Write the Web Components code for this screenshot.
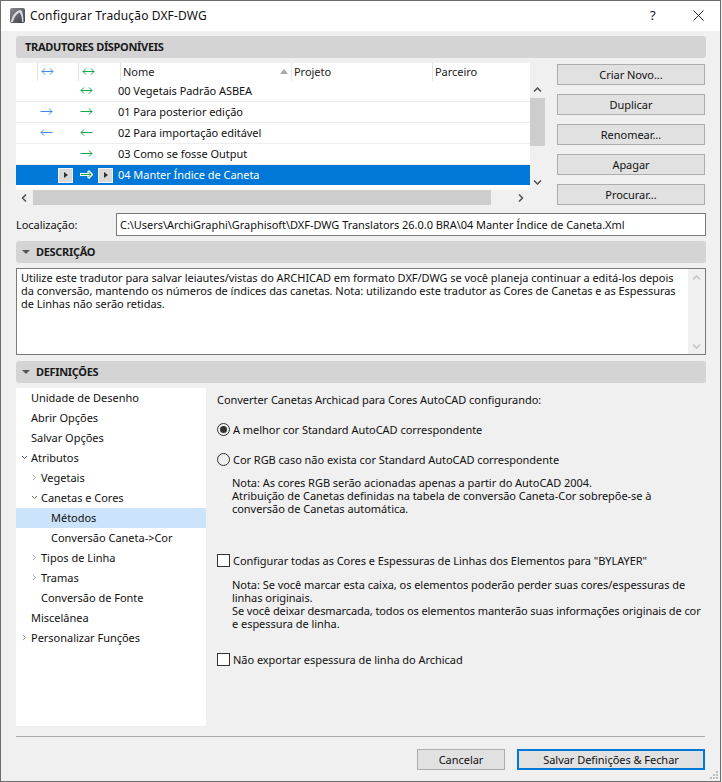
<!DOCTYPE html>
<html lang="pt">
<head>
<meta charset="utf-8">
<title>Configurar Tradução DXF-DWG</title>
<style>
  html, body { margin: 0; height: 782px; overflow: hidden; }
  body { font: 11px/15px "Noto Sans", sans-serif; color: #111; background: #f0f0f0; letter-spacing: -0.04px; }
</style>
</head>
<body>
<dxf-dialog></dxf-dialog>
<script>
const FONT = '"Noto Sans", sans-serif';

function arrow(kind, color) {
  const paths = {
    both: 'M1 4.5H12M4 1.5L1 4.5L4 7.5M9 1.5L12 4.5L9 7.5',
    right: 'M0.5 4.5H12M9 1.5L12 4.5L9 7.5',
    left: 'M1 4.5H12.5M4 1.5L1 4.5L4 7.5'
  };
  return `<svg width="13" height="10" viewBox="0 0 13 10" fill="none" stroke="${color}" stroke-width="1"><path d="${paths[kind]}"/></svg>`;
}

class SectionHead extends HTMLElement {
  constructor() {
    super();
    this.attachShadow({ mode: 'open' });
  }
  connectedCallback() {
    const tri = this.hasAttribute('open') ? '<i></i>' : '';
    this.shadowRoot.innerHTML = `
      <style>
        :host {
          display: flex; align-items: center; gap: 6px; box-sizing: border-box;
          height: 22px; padding: 0 0 2px ${tri ? 6 : 9}px;
          background: #d4d4d4; border-radius: 3px;
          font: 700 11px/15px ${FONT}; letter-spacing: -0.32px; color: #1a1a1a;
        }
        i { width: 0; height: 0; border: 4px solid transparent; border-top: 4px solid #555; border-bottom: 0; margin-top: 2px; }
      </style>${tri}<slot></slot>`;
  }
}

class PushButton extends HTMLElement {
  constructor() {
    super();
    this.attachShadow({ mode: 'open' });
    this.shadowRoot.innerHTML = `
      <style>
        :host {
          display: flex; align-items: center; justify-content: center;
          box-sizing: border-box; height: 21px;
          background: #e1e1e1; border: 1px solid #adadad;
          font: 11px/15px ${FONT}; color: #111;
        }
        :host([primary]) { border: 2px solid #0078d7; }
      </style><slot></slot>`;
  }
}

class ScrollBar extends HTMLElement {
  constructor() {
    super();
    this.attachShadow({ mode: 'open' });
  }
  connectedCallback() {
    const h = this.getAttribute('dir') === 'h';
    const off = this.hasAttribute('off');
    const thumb = this.getAttribute('thumb');
    const start = this.getAttribute('start') || 0;
    const rot = h ? ' style="transform:rotate(-90deg)"' : '';
    const chev = (d) => `<svg${rot} width="9" height="6" viewBox="0 0 9 6" fill="none" stroke="${off ? '#c4c4c4' : '#555'}" stroke-width="1.6"><path d="${d}"/></svg>`;
    this.shadowRoot.innerHTML = `
      <style>
        :host { display: flex; flex-direction: ${h ? 'row' : 'column'}; background: #f0f0f0; ${h ? 'height:15px' : 'width:15px'}; }
        :host([wide]) { width: 17px; }
        .b { flex: none; ${h ? 'width:17px' : 'height:17px'}; display: flex; align-items: center; justify-content: center; }
        .t { flex: 1; min-width: 0; min-height: 0; }
        .th { background: ${off ? 'transparent' : '#cdcdcd'}; ${h ? `height:100%;margin-left:${start}px;width:${thumb}px` : `width:100%;margin-top:${start}px;height:${thumb}px`}; }
      </style>
      <div class="b">${chev('M1 4.5L4.5 1L8 4.5')}</div>
      <div class="t"><div class="th"></div></div>
      <div class="b">${chev('M1 1.5L4.5 5L8 1.5')}</div>`;
  }
}

class TranslatorList extends HTMLElement {
  constructor() {
    super();
    this.attachShadow({ mode: 'open' });
  }
  connectedCallback() {
    const blue = '#3f8cf0', green = '#12a84c';
    const rows = [
      ['', 'both', '00 Vegetais Padrão ASBEA'],
      ['right', 'right', '01 Para posterior edição'],
      ['left', 'left', '02 Para importação editável'],
      ['', 'right', '03 Como se fosse Output']
    ];
    const play = '<b class="play"><u></u></b>';
    this.shadowRoot.innerHTML = `
      <style>
        :host { display: grid; grid-template-columns: 514px 15px; grid-template-rows: 127px 15px; width: 529px; height: 142px; font: 11px/15px ${FONT}; letter-spacing: -0.04px; }
        .table { background: #fff; overflow: hidden; }
        .head { display: grid; grid-template-columns: 21px 41px 42px 160px 11px 141px 1fr; height: 18px; align-items: center; color: #222; }
        .head > div { height: 18px; box-sizing: border-box; border-left: 1px solid #e3e3e3; display: flex; align-items: center; padding: 0 0 1px 2px; }
        .head > div:first-child, .head > .sort { border-left: 0; padding-left: 0; }
        .head > .ic { padding-bottom: 0; }
        .head svg { margin-left: 1px; }
        .sort span { width: 0; height: 0; border: 4px solid transparent; border-bottom: 5px solid #a8a8a8; border-top: 0; }
        .row { display: grid; grid-template-columns: 24px 13px 27px 13px 25px 1fr; height: 20px; margin-bottom: 1px; align-items: center; box-shadow: 0 1px 0 #eee; color: #111; }
        .row svg { display: block; }
        .row .c1 { grid-column: 2; }
        .row .c2 { grid-column: 4; }
        .row .n { grid-column: 6; padding-bottom: 1px; }
        .row.sel { background: #0078d7; color: #fff; box-shadow: none; grid-template-columns: 42px 15px 7px 13px 5px 15px 1fr; }
        .row.sel .n { grid-column: 7; padding-left: 5px; }
        .play { display: flex; align-items: center; justify-content: center; box-sizing: border-box; width: 15px; height: 15px; background: #d9d9d9; border: 1px solid #f2f2f2; }
        .play u { width: 0; height: 0; border: 3.5px solid transparent; border-left: 4px solid #333; border-right: 0; }
        scroll-bar[dir=v] { grid-column: 2; grid-row: 1; margin-top: 18px; }
        scroll-bar[dir=h] { grid-column: 1; grid-row: 2; margin-right: 1px; }
      </style>
      <div class="table">
        <div class="head">
          <div></div><div class="ic">${arrow('both', blue)}</div><div class="ic">${arrow('both', green)}</div>
          <div>Nome</div><div class="sort"><span></span></div><div>Projeto</div><div>Parceiro</div>
        </div>
        ${rows.map(r => `<div class="row"><span class="c1">${r[0] ? arrow(r[0], blue) : ''}</span><span class="c2">${arrow(r[1], green)}</span><span class="n">${r[2]}</span></div>`).join('')}
        <div class="row sel">
          <span style="grid-column:2">${play}</span>
          <span style="grid-column:4"><svg width="13" height="12" viewBox="0 0 13 12" fill="none"><path d="M0 5.5H11.5M8 2L11.5 5.5L8 9" stroke="#fff" stroke-width="3"/><path d="M1 5.5H11M8.5 3L11 5.5L8.5 8" stroke="#17a84f" stroke-width="1"/></svg></span>
          <span style="grid-column:6">${play}</span>
          <span class="n">04 Manter Índice de Caneta</span>
        </div>
      </div>
      <scroll-bar dir="v" thumb="48" start="0"></scroll-bar>
      <scroll-bar dir="h" thumb="458" start="0"></scroll-bar>`;
  }
}

class TreeItem extends HTMLElement {
  constructor() {
    super();
    this.attachShadow({ mode: 'open' });
  }
  connectedCallback() {
    const level = +this.getAttribute('level') || 0;
    const twist = this.getAttribute('twist');
    const icon = twist === 'open'
      ? '<svg width="7" height="7" viewBox="0 0 7 7" fill="none" stroke="#666"><path d="M1 2L3.5 4.5L6 2"/></svg>'
      : twist === 'closed'
        ? '<svg width="7" height="7" viewBox="0 0 7 7" fill="none" stroke="#a5a5a5"><path d="M2 1L4.5 3.5L2 6"/></svg>'
        : '';
    this.shadowRoot.innerHTML = `
      <style>
        :host { display: flex; align-items: center; box-sizing: border-box; height: 20px; padding: 0 0 2px ${5 + level * 10}px; font: 11px/15px ${FONT}; letter-spacing: -0.02px; color: #111; }
        :host([selected]) { background: #cce4fb; }
        .tw { width: 10px; flex: none; display: flex; align-items: center; }
      </style>
      <span class="tw">${icon}</span><slot></slot>`;
  }
}

class OptionMark extends HTMLElement {
  constructor() {
    super();
    this.attachShadow({ mode: 'open' });
  }
  connectedCallback() {
    const radio = this.getAttribute('type') === 'radio';
    const on = this.hasAttribute('checked');
    this.shadowRoot.innerHTML = `
      <style>
        :host { display: flex; align-items: center; gap: 3px; font: 11px/15px ${FONT}; color: #111; }
        .m { flex: none; box-sizing: border-box; width: 13px; height: 13px; border: 1px solid #333; background: ${radio ? 'transparent' : '#fff'}; border-radius: ${radio ? '50%' : '0'}; display: flex; align-items: center; justify-content: center; }
        .m i { width: 7px; height: 7px; border-radius: 50%; background: #333; }
      </style>
      <span class="m">${on ? '<i></i>' : ''}</span><slot></slot>`;
  }
}

class DxfDialog extends HTMLElement {
  constructor() {
    super();
    this.attachShadow({ mode: 'open' });
    this.shadowRoot.innerHTML = `
      <style>
        :host {
          display: flex; flex-direction: column; box-sizing: border-box;
          width: 721px; height: 782px; position: relative;
          background: #f0f0f0; border: 1px solid #6d6d6d;
          font: 11px/15px ${FONT}; color: #111;
        }
        .title { flex: none; height: 30px; box-sizing: border-box; padding: 0 0 2px 9px; background: #fff; display: flex; align-items: center; font-size: 12px; letter-spacing: .14px; color: #111; }
        .title svg.logo { margin-right: 5px; }
        .title .sp { flex: 1; }
        .title .q { width: 46px; text-align: center; font-size: 13px; }
        .title .x { width: 44px; display: flex; justify-content: center; }
        .body { flex: 1; padding: 5px 14px 0 15px; display: flex; flex-direction: column; min-height: 0; }
        .top { display: flex; margin-top: 5px; }
        .btns { margin-left: 12px; width: 148px; padding-top: 1px; display: flex; flex-direction: column; gap: 9px; }
        .loc { display: flex; align-items: center; margin-top: 8px; height: 23px; }
        .loc label { width: 100px; flex: none; }
        .loc div { flex: 1; box-sizing: border-box; height: 23px; background: #fff; border: 1px solid #7a7a7a; padding: 3px 3px; white-space: nowrap; }
        section-head.s2 { margin-top: 5px; }
        section-head.s3 { margin-top: 6px; }
        .desc { display: flex; height: 87px; margin-top: 5px; background: #fff; border: 1px solid #7a7a7a; box-sizing: border-box; }
        .desc p { flex: 1; margin: 0; padding: 2px 4px; line-height: 13px; }
        .defs { display: flex; margin-top: 5px; height: 338px; }
        .tree { width: 190px; flex: none; background: #fff; }
        .pane { padding: 4px 0 0 11px; flex: 1; }
        .pane p { margin: 0; }
        .pane .note { padding-left: 15px; line-height: 13px; white-space: nowrap; }
        .foot { margin: 10px 1px 0 0; border-top: 1px solid #a9a9a9; display: flex; justify-content: flex-end; gap: 12px; padding-top: 12px; }
        .grip { position: absolute; right: 1px; bottom: 1px; }
      </style>
      <div class="title">
        <svg class="logo" width="15" height="15" viewBox="0 0 15 15"><defs><linearGradient id="lg" x1="0" y1="0" x2="1" y2="1"><stop offset="0" stop-color="#8a8a94"/><stop offset="1" stop-color="#3c3c44"/></linearGradient></defs><rect width="15" height="15" rx="2" fill="url(#lg)"/><path d="M1 14C2 7 6 2.5 11 2C13 4 13.5 9 13.5 14H12C12 9 11 6 9.5 4.5C6.5 6 4 9 3 14Z" fill="#d8d8dc"/></svg>
        Configurar Tradução DXF-DWG
        <span class="sp"></span>
        <span class="q">?</span>
        <span class="x"><svg width="11" height="11" viewBox="0 0 11 11" stroke="#222" fill="none"><path d="M.5 .5L10.5 10.5M10.5 .5L.5 10.5"/></svg></span>
      </div>
      <div class="body">
        <section-head>TRADUTORES DÍSPONÍVEIS</section-head>
        <div class="top">
          <translator-list></translator-list>
          <div class="btns">
            <push-button>Criar Novo...</push-button>
            <push-button>Duplicar</push-button>
            <push-button>Renomear...</push-button>
            <push-button>Apagar</push-button>
            <push-button>Procurar...</push-button>
          </div>
        </div>
        <div class="loc"><label>Localização:</label><div>C:\\Users\\ArchiGraphi\\Graphisoft\\DXF-DWG Translators 26.0.0 BRA\\04 Manter Índice de Caneta.Xml</div></div>
        <section-head class="s2" open>DESCRIÇÃO</section-head>
        <div class="desc">
          <p>Utilize este tradutor para salvar leiautes/vistas do ARCHICAD em formato DXF/DWG se você planeja continuar a editá-los depois da conversão, mantendo os números de índices das canetas. Nota: utilizando este tradutor as Cores de Canetas e as Espessuras de Linhas não serão retidas.</p>
          <scroll-bar dir="v" thumb="0" off wide></scroll-bar>
        </div>
        <section-head class="s3" open>DEFINIÇÕES</section-head>
        <div class="defs">
          <div class="tree">
            <tree-item>Unidade de Desenho</tree-item>
            <tree-item>Abrir Opções</tree-item>
            <tree-item>Salvar Opções</tree-item>
            <tree-item twist="open">Atributos</tree-item>
            <tree-item level="1" twist="closed">Vegetais</tree-item>
            <tree-item level="1" twist="open">Canetas e Cores</tree-item>
            <tree-item level="2" selected>Métodos</tree-item>
            <tree-item level="2">Conversão Caneta-&gt;Cor</tree-item>
            <tree-item level="1" twist="closed">Tipos de Linha</tree-item>
            <tree-item level="1" twist="closed">Tramas</tree-item>
            <tree-item level="1">Conversão de Fonte</tree-item>
            <tree-item>Miscelânea</tree-item>
            <tree-item twist="closed">Personalizar Funções</tree-item>
          </div>
          <div class="pane">
            <p>Converter Canetas Archicad para Cores AutoCAD configurando:</p>
            <option-mark type="radio" checked style="margin-top:15px">A melhor cor Standard AutoCAD correspondente</option-mark>
            <option-mark type="radio" style="margin-top:15px">Cor RGB caso não exista cor Standard AutoCAD correspondente</option-mark>
            <p class="note" style="margin-top:9px">Nota: As cores RGB serão acionadas apenas a partir do AutoCAD 2004.<br>Atribuição de Canetas definidas na tabela de conversão Caneta-Cor sobrepõe-se à<br>conversão de Canetas automática.</p>
            <option-mark type="box" style="margin-top:38px">Configurar todas as Cores e Espessuras de Linhas dos Elementos para "BYLAYER"</option-mark>
            <p class="note" style="margin-top:10px">Nota: Se você marcar esta caixa, os elementos poderão perder suas cores/espessuras de<br>linhas originais.<br><span style="letter-spacing:-.1px">Se você deixar desmarcada, todos os elementos manterão suas informações originais de cor</span><br>e espessura de linha.</p>
            <option-mark type="box" style="margin-top:22px">Não exportar espessura de linha do Archicad</option-mark>
          </div>
        </div>
        <div class="foot">
          <push-button style="width:88px">Cancelar</push-button>
          <push-button primary style="width:188px">Salvar Definições &amp; Fechar</push-button>
        </div>
      </div>
      <svg class="grip" width="9" height="9" viewBox="0 0 9 9" fill="#bdbdbd"><rect x="6" y="0" width="2" height="2"/><rect x="3" y="3" width="2" height="2"/><rect x="6" y="3" width="2" height="2"/><rect x="0" y="6" width="2" height="2"/><rect x="3" y="6" width="2" height="2"/><rect x="6" y="6" width="2" height="2"/></svg>`;
  }
}

customElements.define('section-head', SectionHead);
customElements.define('push-button', PushButton);
customElements.define('scroll-bar', ScrollBar);
customElements.define('translator-list', TranslatorList);
customElements.define('tree-item', TreeItem);
customElements.define('option-mark', OptionMark);
customElements.define('dxf-dialog', DxfDialog);
</script>
</body>
</html>
